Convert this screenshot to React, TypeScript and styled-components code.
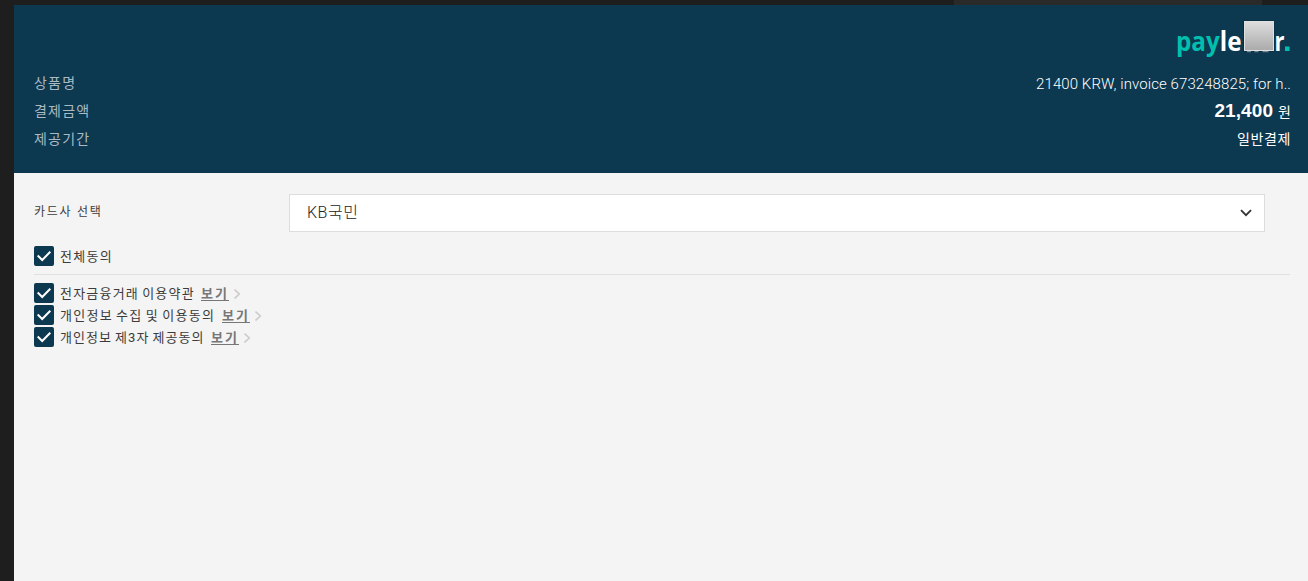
import React from "react";
import styled, { createGlobalStyle } from "styled-components";

const GlobalStyle = createGlobalStyle`
  * { box-sizing: border-box; }
  body {
    margin: 0;
    background: #1e1e1e;
    font-family: Roboto, "Liberation Sans", "Noto Sans CJK KR", sans-serif;
    overflow: hidden;
  }
`;

const Page = styled.div`
  display: flex;
  flex-direction: column;
  height: 581px;
  padding-left: 14px;
`;

const TopStrip = styled.div`
  height: 5px;
  width: 308px;
  flex: none;
  align-self: flex-end;
  margin-right: 46px;
  background: #2a2a2a;
`;

const Header = styled.header`
  height: 168px;
  flex: none;
  padding: 13px 17px 0 20px;
  background: #0c3850;
`;

const LogoRow = styled.div`
  display: flex;
  justify-content: flex-end;
  height: 51px;
  margin-right: -2px;
`;

const Row = styled.div`
  display: flex;
  justify-content: space-between;
  align-items: center;
  height: 28px;
`;

const Text = styled.span<{ $size?: number; $spacing?: number; $color?: string; $light?: boolean }>`
  color: ${({ $color }) => $color || "#3c3c3c"};
  font-size: ${({ $size }) => $size || 12}px;
  letter-spacing: ${({ $spacing }) => $spacing || 0}px;
  font-weight: ${({ $light }) => ($light ? 300 : 400)};
  line-height: 20px;
  white-space: nowrap;
`;

const ProductText = styled(Text)`
  padding-top: 2px;
`;

const Amount = styled.strong`
  margin-right: 5px;
  font-family: "Liberation Sans", sans-serif;
  font-size: 19px;
  font-weight: 700;
  letter-spacing: 0.1px;
`;

const Main = styled.main`
  flex: 1;
  padding: 21px 18px 0 20px;
  background: #f4f4f4;
`;

const CardRow = styled.div`
  display: grid;
  grid-template-columns: 255px 976px;
  height: 38px;
`;

const CardLabel = styled.div`
  padding-top: 7px;
`;

const SelectBox = styled.div`
  display: flex;
  align-items: center;
  justify-content: space-between;
  padding: 0 12px 0 17px;
  background: #fff;
  border: 1px solid #ddd;
`;

const AgreeRow = styled.label`
  display: flex;
  align-items: center;
  height: 22px;
`;

const AgreeAll = styled(AgreeRow)`
  height: 43px;
  padding-top: 6px;
  border-bottom: 1px solid #e0e0e0;
`;

const AgreeList = styled.div`
  padding-top: 7px;
`;

const Box = styled.span`
  display: flex;
  flex: none;
  width: 20px;
  height: 20px;
  margin-right: 6px;
  border-radius: 2px;
  background: #0c3850;
`;

const AgreeText = styled(Text)<{ $width?: number }>`
  width: ${({ $width }) => ($width ? `${$width}px` : "auto")};
  padding-top: 2px;
  word-spacing: -1.2px;
`;

const ViewLink = styled.a`
  height: 15px;
  margin: 1px 5px 0 6px;
  border-bottom: 1px solid #777;
  color: #777;
  font-size: 13px;
  font-weight: 700;
  letter-spacing: 2px;
  line-height: 15px;
`;

const terms = [
  { label: "전자금융거래 이용약관", width: 135, spacing: 1.2 },
  { label: "개인정보 수집 및 이용동의", width: 156, spacing: 1.25 },
  { label: "개인정보 제3자 제공동의", width: 145, spacing: 1.05 },
];

const Logo = () => (
  <svg width="118" height="44" viewBox="0 0 118 44">
    <defs>
      <linearGradient id="tile" x1="0" y1="0" x2="0" y2="1">
        <stop offset="0" stopColor="#dedede" />
        <stop offset="1" stopColor="#aaa" />
      </linearGradient>
    </defs>
    <g fontFamily="Open Sans, sans-serif" fontWeight="700" fontSize="26">
      <text x="1" y="33" fill="#00bfae" textLength="65.5" lengthAdjust="spacingAndGlyphs">
        pay<tspan fill="#fff">le</tspan>
      </text>
      <text x="99.5" y="33" fill="#fff" textLength="10" lengthAdjust="spacingAndGlyphs">r</text>
    </g>
    <rect x="110" y="28.5" width="4.5" height="4.5" fill="#00bfae" />
    <rect x="68" y="2.5" width="31.5" height="31" rx="1" fill="#0a2b3d" />
    <path d="M72 33.7h4M79.5 33.7h4M87.5 33.7h6" stroke="#a9b6bd" strokeWidth="0.8" />
    <rect x="69.5" y="3.5" width="29" height="29" fill="url(#tile)" stroke="#e0e0e0" strokeWidth="1" />
  </svg>
);

const Checkbox = () => (
  <Box>
    <svg width="20" height="20" viewBox="0 0 20 20">
      <path d="M3.7 9.5 8.2 14 16.3 5.8" fill="none" stroke="#fff" strokeWidth="2" />
    </svg>
  </Box>
);

const App: React.FC = () => (
  <>
    <GlobalStyle />
    <Page>
      <TopStrip />
      <Header>
        <LogoRow>
          <Logo />
        </LogoRow>
        <Row>
          <Text $size={14} $spacing={1.2} $color="#a9bac3">상품명</Text>
          <ProductText $size={15} $spacing={0.08} $color="#fff" $light>21400 KRW, invoice 673248825; for h..</ProductText>
        </Row>
        <Row>
          <Text $size={14} $spacing={1.2} $color="#a9bac3">결제금액</Text>
          <Text $size={14} $color="#fff">
            <Amount>21,400</Amount>원
          </Text>
        </Row>
        <Row>
          <Text $size={14} $spacing={1.2} $color="#a9bac3">제공기간</Text>
          <Text $size={14} $spacing={0.6} $color="#fff">일반결제</Text>
        </Row>
      </Header>
      <Main>
        <CardRow>
          <CardLabel>
            <Text $size={12} $spacing={1.7}>카드사 선택</Text>
          </CardLabel>
          <SelectBox>
            <Text $size={16} $spacing={0.5} $color="#222" $light>KB국민</Text>
            <svg width="12" height="8" viewBox="0 0 12 8">
              <path d="M1 1.2 6 6.2 11 1.2" fill="none" stroke="#333" strokeWidth="1.8" />
            </svg>
          </SelectBox>
        </CardRow>
        <AgreeAll>
          <Checkbox />
          <AgreeText $size={13} $spacing={1.3}>전체동의</AgreeText>
        </AgreeAll>
        <AgreeList>
          {terms.map(({ label, width, spacing }) => (
            <AgreeRow key={label}>
              <Checkbox />
              <AgreeText $size={13} $width={width} $spacing={spacing}>{label}</AgreeText>
              <ViewLink>보기</ViewLink>
              <svg width="8" height="12" viewBox="0 0 8 12">
                <path d="M0.5 2.5 5.3 7 0.5 11.5" fill="none" stroke="#ccc" strokeWidth="1.6" />
              </svg>
            </AgreeRow>
          ))}
        </AgreeList>
      </Main>
    </Page>
  </>
);

export default App;
